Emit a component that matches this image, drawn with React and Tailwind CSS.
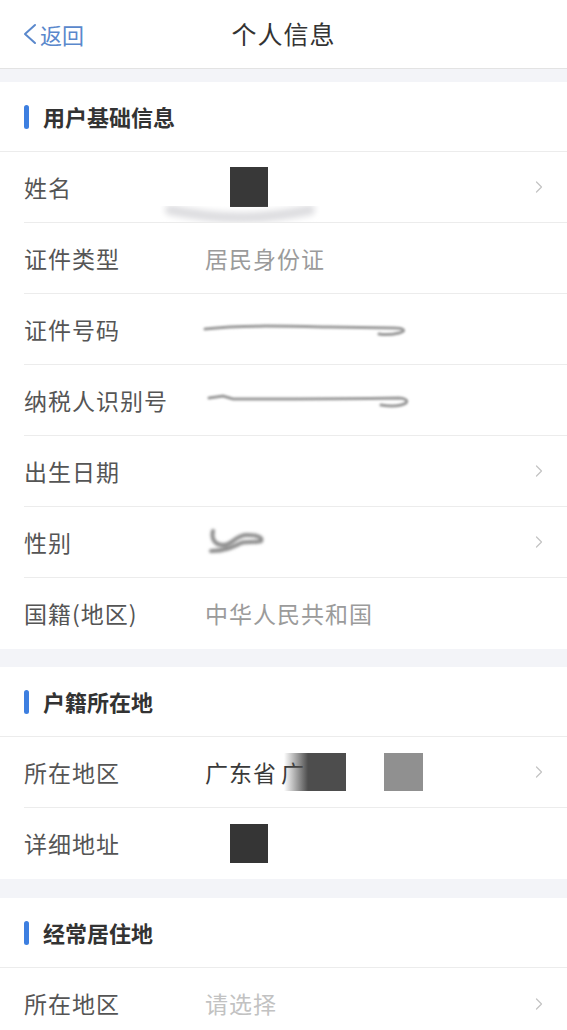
import { ChevronRight } from 'lucide-react';

const FONT = { fontFamily: '"Noto Sans CJK SC", "Noto Sans", sans-serif' };

// blurred scribble used where the original value was smeared out
function Smear({ id, width, height, d, strokeWidth = 4, color = '#8a8a8a', blur = 1.6 }) {
  return (
    <svg width={width} height={height} viewBox={`0 0 ${width} ${height}`} className="block">
      <defs>
        <filter id={id} x="-20%" y="-50%" width="140%" height="200%">
          <feGaussianBlur stdDeviation={blur} />
        </filter>
      </defs>
      <path d={d} fill="none" stroke={color} strokeWidth={strokeWidth} strokeLinecap="round" filter={`url(#${id})`} />
    </svg>
  );
}

function SectionTitle({ title }) {
  return (
    <div className="h-[70px] flex items-center px-6 border-b border-[#ececec]">
      <span className="w-[5px] h-[24px] rounded-full bg-[#3d7fe0] mr-[14px]" />
      <span className="text-[22px] font-bold text-[#333333]">{title}</span>
    </div>
  );
}

function Row({ label, children, arrow, last }) {
  return (
    <div className="pl-6">
      <div className={`h-[71px] flex items-center pr-6 ${last ? '' : 'border-b border-[#ececec]'}`}>
        <div className="w-[181px] shrink-0 text-[23px] text-[#555555] tracking-[1px]">{label}</div>
        <div className="flex-1 flex items-center min-w-0">{children}</div>
        {arrow && <ChevronRight size={20} strokeWidth={1.5} className="text-[#c4c4c4] -mr-[6px]" />}
      </div>
    </div>
  );
}

const Value = ({ children, light }) => (
  <span className={`text-[23px] tracking-[1px] ${light ? 'text-[#c2c2c2]' : 'text-[#9b9b9b]'}`}>{children}</span>
);

export default function App() {
  return (
    <div className="w-[567px] min-h-[1030px] bg-[#f3f4f8]" style={FONT}>
      {/* nav bar */}
      <div className="h-[69px] bg-white border-b border-[#e3e3e3] flex items-center relative">
        <div className="flex items-center pl-[22px] text-[#5a88cc] text-[22px]">
          <svg width="16" height="22" viewBox="0 0 16 22" className="mr-[2px]">
            <path d="M13 2 L3 11 L13 20" fill="none" stroke="currentColor" strokeWidth="2" strokeLinecap="round" strokeLinejoin="round" />
          </svg>
          <span>返回</span>
        </div>
        <div className="absolute inset-x-0 top-0 h-full flex items-center justify-center pointer-events-none">
          <span className="text-[25px] text-[#333333] tracking-[1px]">个人信息</span>
        </div>
      </div>

      <div className="h-[13px]" />

      {/* 用户基础信息 */}
      <div className="bg-white">
        <SectionTitle title="用户基础信息" />
        <Row label="姓名" arrow>
          <div className="relative h-[70px] flex items-center">
            <div className="ml-[25px] w-[38px] h-[40px] bg-[#383838]" />
            <div className="absolute left-[-45px] top-[50px]">
              <Smear id="s-name" width={160} height={24} d="M10 8 C60 18 100 18 150 8" strokeWidth={10} color="#dcdcdf" blur={3} />
            </div>
          </div>
        </Row>
        <Row label="证件类型">
          <Value>居民身份证</Value>
        </Row>
        <Row label="证件号码">
          <div className="-ml-[6px]">
            <Smear id="s-id" width={215} height={24} d="M6 12 C40 8 80 9 130 10 L195 11 C205 11 208 14 200 16 C192 18 186 18 180 17" strokeWidth={3} color="#9a9a9a" blur={1.3} />
          </div>
        </Row>
        <Row label="纳税人识别号">
          <div className="-ml-[2px]">
            <Smear id="s-tax" width={215} height={24} d="M6 10 L20 8 L30 11 C80 11 140 11 196 10 C206 11 206 15 198 17 C190 19 184 18 178 17" strokeWidth={3} color="#9a9a9a" blur={1.3} />
          </div>
        </Row>
        <Row label="出生日期" arrow />
        <Row label="性别" arrow>
          <Smear id="s-sex" width={64} height={34} d="M8 6 C6 14 10 20 18 20 C28 20 30 10 42 10 C52 10 58 12 56 16 C50 18 42 16 36 18 C28 22 20 26 6 26" strokeWidth={4} color="#8c8c8c" blur={1.6} />
        </Row>
        <Row label="国籍(地区)" last>
          <Value>中华人民共和国</Value>
        </Row>
      </div>

      <div className="h-[18px]" />

      {/* 户籍所在地 */}
      <div className="bg-white">
        <SectionTitle title="户籍所在地" />
        <Row label="所在地区" arrow>
          <span className="text-[23px] tracking-[1px] text-[#3a3a3a]">广东省</span>
          <span className="ml-[4px] text-[23px] text-[#3a3a3a]">广</span>
          <div className="-ml-[20px] w-[24px] h-[38px] bg-gradient-to-r from-transparent to-[#4d4d4d]" />
          <div className="w-[38px] h-[38px] bg-[#4d4d4d]" />
          <div className="ml-[38px] w-[39px] h-[38px] bg-[#909090]" />
        </Row>
        <Row label="详细地址" last>
          <div className="ml-[25px] w-[38px] h-[39px] bg-[#353535]" />
        </Row>
      </div>

      <div className="h-[19px]" />

      {/* 经常居住地 */}
      <div className="bg-white">
        <SectionTitle title="经常居住地" />
        <Row label="所在地区" arrow last>
          <Value light>请选择</Value>
        </Row>
      </div>
    </div>
  );
}
